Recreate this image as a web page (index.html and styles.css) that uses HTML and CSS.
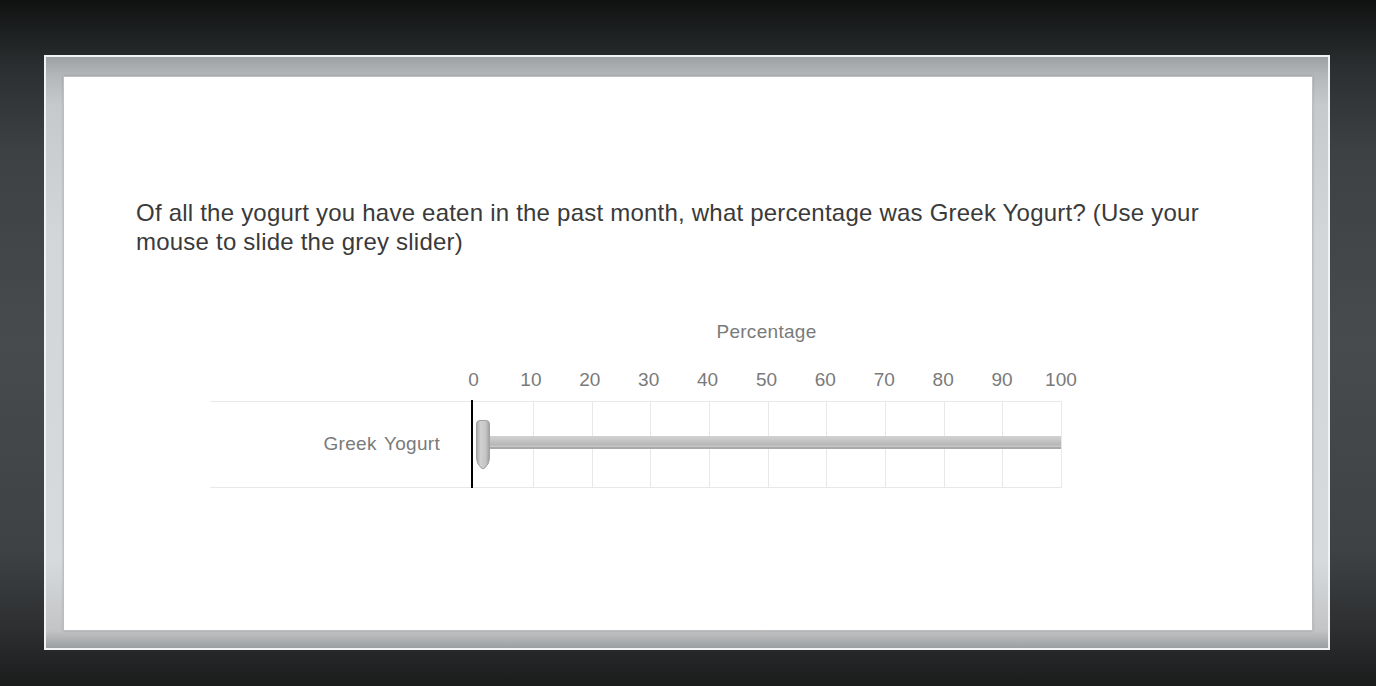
FILE: index.html
```html
<!DOCTYPE html>
<html>
<head>
<meta charset="utf-8">
<link rel="stylesheet" href="styles.css">
</head>
<body>
<div class="frame">
  <div class="card">
    <p class="question">Of all the yogurt you have eaten in the past month, what percentage was Greek Yogurt? (Use your mouse to slide the grey slider)</p>
    <div class="chart">
      <div class="axis-title-row">
        <div class="label-col"></div>
        <div class="plot-col axis-title">Percentage</div>
      </div>
      <div class="ticks-row">
        <div class="label-col"></div>
        <div class="plot-col">
          <div class="ticks">
            <span class="first">0</span><span>10</span><span>20</span><span>30</span><span>40</span><span>50</span><span>60</span><span>70</span><span>80</span><span>90</span><span>100</span>
          </div>
        </div>
      </div>
      <div class="row">
        <div class="label-col row-label">Greek Yogurt</div>
        <div class="plot">
          <div class="grid">
            <i class="wide"></i><i></i><i></i><i></i><i></i><i></i><i></i><i></i><i></i><i></i>
          </div>
          <div class="track"></div>
          <svg class="handle" width="14" height="50" viewBox="0 0 14 50">
            <defs>
              <linearGradient id="hg" x1="0" y1="0" x2="1" y2="0">
                <stop offset="0" stop-color="#a6a6a6"/>
                <stop offset="0.3" stop-color="#d0d0d0"/>
                <stop offset="0.7" stop-color="#c6c6c6"/>
                <stop offset="1" stop-color="#9e9e9e"/>
              </linearGradient>
            </defs>
            <path d="M0.5 4 Q0.5 0.5 4 0.5 L10 0.5 Q13.5 0.5 13.5 4 L13.5 38 Q13.5 44 8.5 48.2 Q7 49.5 5.5 48.2 Q0.5 44 0.5 38 Z" fill="url(#hg)" stroke="#a2a2a2" stroke-width="1"/>
          </svg>
        </div>
      </div>
    </div>
  </div>
</div>
</body>
</html>
```
FILE: styles.css
```css
html, body {
  margin: 0;
  padding: 0;
}
body {
  width: 1376px;
  height: 686px;
  overflow: hidden;
  background: linear-gradient(to bottom, #101212 0%, #2c2f31 10%, #3e4143 22%, #484b4d 50%, #3f4244 80%, #2c2e30 92%, #1a1c1c 100%);
  padding: 55px 0 0 44px;
  box-sizing: border-box;
  font-family: "Liberation Sans", Arial, sans-serif;
}
.frame {
  width: 1286px;
  height: 595px;
  box-sizing: border-box;
  border: 2px solid #f1f2f2;
  padding: 19px 15px 17px 17px;
  background: linear-gradient(to bottom, #9da1a3 0%, #b3b6b8 3%, #c6c9cb 8%, #d3d6d8 30%, #d7dadc 85%, #c2c4c6 97%, #9c9fa1 100%);
}
.card {
  height: 100%;
  box-sizing: border-box;
  background: #fff;
  border: 1px solid #bcbebf;
  box-shadow: 0 0 2px rgba(0,0,0,0.18);
  padding: 121px 72px 0 72px;
}
.question {
  margin: 0;
  font-size: 24px;
  line-height: 29px;
  color: #3a3a3a;
  letter-spacing: 0.22px;
}
.chart {
  margin-top: 64px;
  margin-left: 74px;
  color: #7a7a7a;
  font-size: 19px;
}
.label-col {
  width: 262px;
  flex: none;
}
.plot-col {
  width: 589px;
  flex: none;
}
.axis-title-row, .ticks-row, .row {
  display: flex;
}
.axis-title {
  text-align: center;
  line-height: 24px;
  letter-spacing: 0.3px;
}
.ticks-row {
  margin-top: 24px;
}
.ticks {
  display: grid;
  grid-template-columns: repeat(11, 58.9px);
  margin-left: -29.45px;
  line-height: 24px;
}
.ticks span {
  text-align: center;
}
.ticks .first {
  padding-left: 3px;
}
.row {
  margin-top: 8px;
  height: 88px;
}
.row-label {
  box-sizing: border-box;
  border-top: 1px solid #e8e8e8;
  border-bottom: 1px solid #e8e8e8;
  height: 87px;
  margin-top: 1px;
  text-align: right;
  padding-right: 32px;
  line-height: 84px;
  letter-spacing: 0.3px;
  word-spacing: 2px;
}
.plot {
  position: relative;
  width: 591px;
  flex: none;
  box-sizing: border-box;
  border-left: 2px solid #000;
  margin-left: -1px;
}
.grid {
  display: flex;
  height: 87px;
  margin-top: 1px;
  box-sizing: border-box;
  border-top: 1px solid #e8e8e8;
  border-bottom: 1px solid #e8e8e8;
}
.grid i {
  flex: 1 1 0;
  border-right: 1px solid #e8e8e8;
}
.grid i.wide {
  flex: none;
  width: 60px;
}
.track {
  position: absolute;
  left: 10px;
  right: 1px;
  top: 36px;
  height: 13px;
  box-sizing: border-box;
  background: linear-gradient(to bottom, #d2d2d2 0%, #c8c8c8 35%, #b6b6b6 80%, #cccccc 100%);
  border-bottom: 2px solid #a9a9a9;
}
.handle {
  position: absolute;
  left: 3px;
  top: 20px;
}
```
